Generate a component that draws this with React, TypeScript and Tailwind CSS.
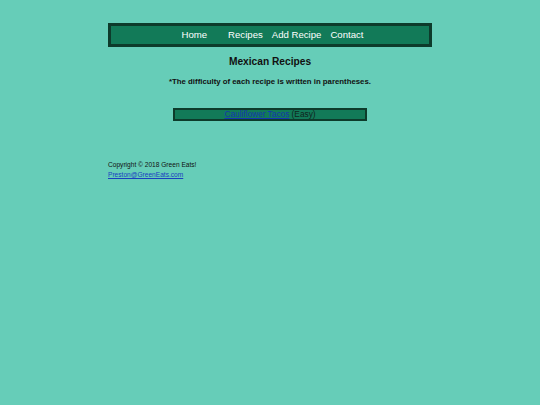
export default function App() {
  return (
    <div
      className="w-[540px] h-[405px] bg-[#66cdb8] text-[#111] overflow-hidden"
      style={{ fontFamily: '"Liberation Sans", Arial, sans-serif' }}
    >
      <div className="pt-[23px]">
        <nav className="mx-auto w-[324px] h-[24px] border-[3px] border-[#0d3b2b] bg-[#127a58] flex items-center justify-center pl-[5px] text-white text-[9.6px]">
          <span className="mr-[21px]">Home</span>
          <span className="mr-[9px]">Recipes</span>
          <span className="mr-[9px]">Add Recipe</span>
          <span>Contact</span>
        </nav>
        <h2 className="mt-[8px] text-center font-bold text-[10.2px] leading-[14px]">Mexican Recipes</h2>
        <p className="mt-[8px] text-center font-bold text-[7.8px] leading-[10px]">
          *The difficulty of each recipe is written in parentheses.
        </p>
        <div className="mt-[21px] mx-auto w-[194px] h-[13px] border-[2px] border-[#0d3b2b] bg-[#127a58] flex items-center justify-center text-[8.3px]">
          <span>
            <a href="#" className="text-[#1535b0] underline">Cauliflower Tacos</a>
            <span className="text-[#10241c]"> (Easy)</span>
          </span>
        </div>
        <footer className="mt-[39px] ml-[108px] text-[6.6px] leading-[9.5px]">
          <div>Copyright © 2018 Green Eats!</div>
          <a href="#" className="text-[#1a3fc0] underline">Preston@GreenEats.com</a>
        </footer>
      </div>
    </div>
  );
}
